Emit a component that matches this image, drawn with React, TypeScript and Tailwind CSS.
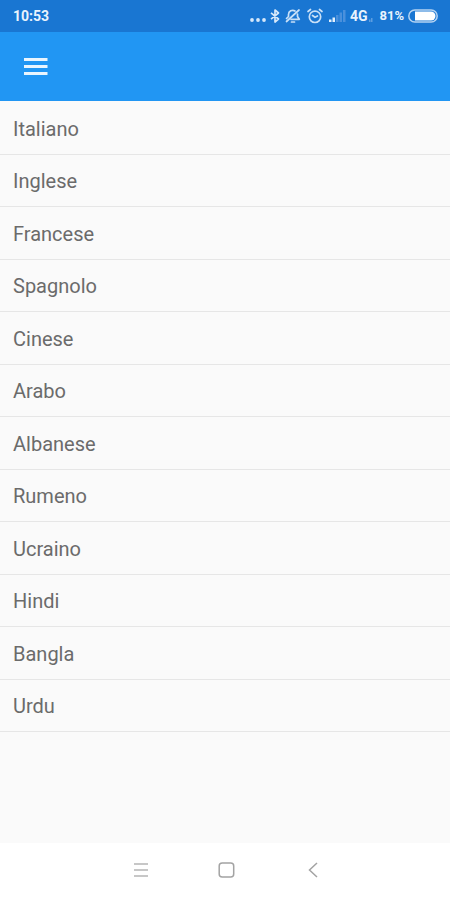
import type { ReactNode } from "react";

const languages = [
  "Italiano",
  "Inglese",
  "Francese",
  "Spagnolo",
  "Cinese",
  "Arabo",
  "Albanese",
  "Rumeno",
  "Ucraino",
  "Hindi",
  "Bangla",
  "Urdu",
];

export default function App() {
  return (
    <div className="flex min-h-screen flex-col bg-[#fafafa] font-['Roboto',sans-serif]">
      <StatusBar />
      <header className="flex h-[69px] items-center bg-[#2196f3] px-5">
        <button type="button" aria-label="Menu" className="p-1">
          <svg width="24" height="18" viewBox="0 0 24 18" fill="#e9f5fe" aria-hidden="true">
            <path d="M0 0h23.5v3H0zM0 7h23.5v3H0zM0 14h23.5v3H0z" />
          </svg>
        </button>
      </header>
      <main className="flex-1 pt-px">
        <ul>
          {languages.map((name) => (
            <li key={name} className="border-b border-[#e6e6e6] odd:h-[53px] even:h-[52px]">
              <button
                type="button"
                className="flex h-full w-full items-center px-[13px] pt-px text-left text-xl text-[#6b6b6b]"
              >
                {name}
              </button>
            </li>
          ))}
        </ul>
      </main>
      <NavBar />
    </div>
  );
}

function StatusBar() {
  return (
    <div className="flex h-8 items-center justify-between bg-[#1976d2] px-3 text-[#e9f3fd]">
      <span className="pl-px text-sm font-bold">10:53</span>
      <div className="flex items-center gap-1 text-[13px] font-bold">
        <svg width="16" height="16" viewBox="0 0 16 16" fill="#d6e8fa" aria-hidden="true">
          <circle cx="2" cy="12" r="1.9" />
          <circle cx="8" cy="12" r="1.9" />
          <circle cx="14" cy="12" r="1.9" />
        </svg>
        <BluetoothIcon />
        <MutedBellIcon />
        <AlarmIcon />
        <SignalIcon />
        <div className="flex items-center">
          <span className="text-sm">4G</span>
          <svg width="8" height="16" viewBox="0 0 8 16" aria-hidden="true">
            <path d="M2 11.5h1.5V14H2zM4 10h1.5v4H4z" fill="#5c9de0" />
          </svg>
        </div>
        <span>81%</span>
        <BatteryIcon />
      </div>
    </div>
  );
}

function BluetoothIcon() {
  return (
    <svg width="10" height="16" viewBox="0 0 10 16" fill="none" aria-hidden="true">
      <path
        d="M1 4.8 8.5 11 5 14V2l3.5 3L1 11.2"
        stroke="#d6e8fa"
        strokeWidth="1.7"
        strokeLinejoin="round"
      />
    </svg>
  );
}

function MutedBellIcon() {
  return (
    <svg
      width="18"
      height="16"
      viewBox="0 0 18 16"
      fill="none"
      stroke="#c9e0f7"
      strokeWidth="1.7"
      strokeLinecap="round"
      strokeLinejoin="round"
      aria-hidden="true"
    >
      <path d="M2.5 10.5 4.5 8.5V6.5a4.2 4.2 0 0 1 6.5-3.5" />
      <path d="M13.5 6v2.5l1.8 2.8H7" />
      <path d="M7.5 14h3M2.5 13.5 15 2" />
    </svg>
  );
}

function AlarmIcon() {
  return (
    <svg
      width="18"
      height="16"
      viewBox="0 0 18 16"
      fill="none"
      stroke="#c9e0f7"
      strokeWidth="1.7"
      strokeLinecap="round"
      aria-hidden="true"
    >
      <circle cx="9" cy="8.8" r="5.7" />
      <path d="M6.5 7.5 9 9.3l2.5-1.3M2 3.5 4.5 1.5M16 3.5l-2.5-2" />
    </svg>
  );
}

function SignalIcon() {
  return (
    <svg width="18" height="16" viewBox="0 0 18 16" aria-hidden="true">
      <path d="M1 11.5h2.5V14H1zM4.5 9.5H7V14H4.5z" fill="#e3f0fc" />
      <path d="M8 7h2.5v7H8zM11.5 4.5H14V14h-2.5zM15 2h2.5v12H15z" fill="#4a90dc" />
    </svg>
  );
}

function BatteryIcon() {
  return (
    <svg width="30" height="14" viewBox="0 0 30 14" fill="none" aria-hidden="true">
      <rect x="0.8" y="1" width="28.4" height="12" rx="6" stroke="#b5d3f2" strokeWidth="1.5" />
      <path d="M7 2.5h16a4.5 4.5 0 0 1 0 9H7z" fill="#fff" />
    </svg>
  );
}

function NavButton({ label, children }: { label: string; children: ReactNode }) {
  return (
    <button type="button" aria-label={label} className="p-2">
      <svg
        width="18"
        height="18"
        viewBox="0 0 18 18"
        fill="none"
        stroke="#a3a3a3"
        strokeWidth="1.5"
        aria-hidden="true"
      >
        {children}
      </svg>
    </button>
  );
}

function NavBar() {
  return (
    <nav className="flex h-[57px] items-center justify-center gap-13 bg-white pb-[3px] pl-[3px]">
      <NavButton label="Recent apps">
        <path d="M2 3h14M2 9h14M2 15h14" stroke="#b5b5b5" />
      </NavButton>
      <NavButton label="Home">
        <rect x="1.2" y="2" width="14.5" height="14" rx="3" />
      </NavButton>
      <NavButton label="Back">
        <path d="M13 2 5.5 9l7.5 7" />
      </NavButton>
    </nav>
  );
}
